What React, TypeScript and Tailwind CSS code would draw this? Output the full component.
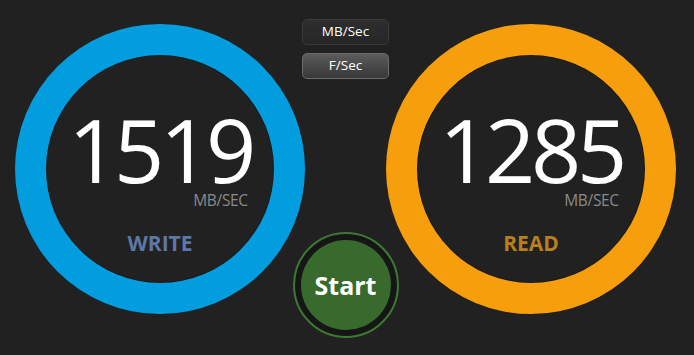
const FONT = "font-['Open_Sans',_'Liberation_Sans',_sans-serif]";

type GaugeProps = {
  value: number;
  label: string;
  ringClass: string;
  labelClass: string;
};

function Gauge({ value, label, ringClass, labelClass }: GaugeProps) {
  return (
    <div className={`w-[290px] h-[290px] shrink-0 rounded-full p-[32px] ${ringClass}`}>
      <div className="w-full h-full rounded-full bg-[#212121] shadow-[0_0_0_1px_#1b1b1b] flex flex-col items-center pt-[49px]">
        <div className="flex flex-col items-end">
          <span className="text-[88px] leading-none text-white tracking-[-0.05em]">{value}</span>
          <span className="text-[15.5px] leading-none text-[#8a8a8a] tracking-[-0.02em] pr-[4px]">MB/SEC</span>
        </div>
        <span className={`mt-[24px] text-[21px] leading-none font-bold ${labelClass}`}>{label}</span>
      </div>
    </div>
  );
}

export default function App() {
  return (
    <div className={`w-[694px] h-[355px] bg-[#212121] flex pl-[15px] pt-[24px] ${FONT}`}>
      <Gauge value={1519} label="WRITE" ringClass="bg-[#029ddf]" labelClass="text-[#5d78a7]" />

      {/* unit toggles + start */}
      <div className="w-[81px] shrink-0 flex flex-col items-center -mt-[5px] relative z-10">
        <button className="w-[87px] h-[26px] shrink-0 rounded-[5px] border border-[#3b3b3b] bg-gradient-to-b from-[#2e2e2e] to-[#262626] text-white text-[13.5px] leading-none">
          MB/Sec
        </button>
        <button className="mt-[8px] w-[87px] h-[26px] shrink-0 rounded-[5px] border border-[#6a6a6a] bg-gradient-to-b from-[#5c5c5c] to-[#383838] text-white text-[13.5px] leading-none">
          F/Sec
        </button>
        <div className="mt-[153px] w-[106px] h-[106px] shrink-0 rounded-full border-2 border-[#3c7a32] bg-[#161616] flex items-center justify-center">
          <button className="w-[90px] h-[90px] rounded-full bg-[#386a2e] text-white font-bold text-[25px] leading-none">
            Start
          </button>
        </div>
      </div>

      <Gauge value={1285} label="READ" ringClass="bg-[#f69e0c]" labelClass="text-[#b7801d]" />
    </div>
  );
}
